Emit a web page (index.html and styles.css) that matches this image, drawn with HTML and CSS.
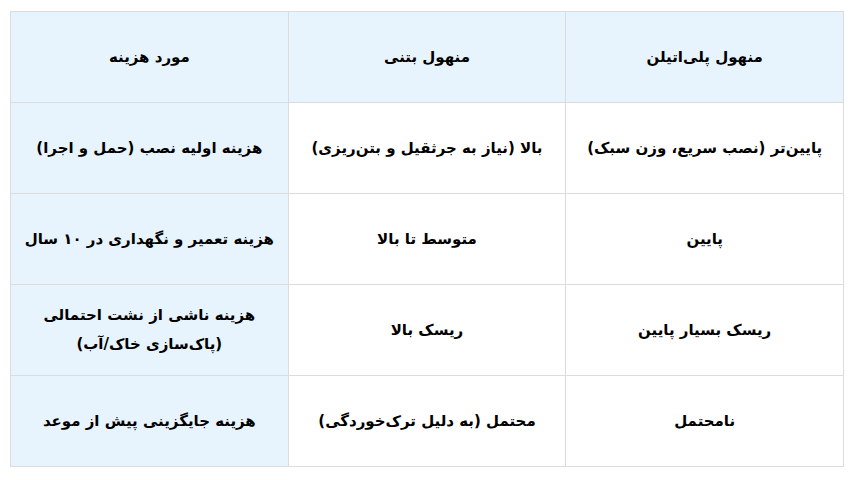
FILE: index.html
```html
<!DOCTYPE html>
<html lang="fa">
<head>
<meta charset="utf-8">
<link rel="stylesheet" href="styles.css">
</head>
<body>
<table class="cost-table">
  <tr class="head">
    <td class="key">مورد هزینه</td>
    <td>منهول بتنی</td>
    <td>منهول پلی‌اتیلن</td>
  </tr>
  <tr>
    <td class="key">هزینه اولیه نصب (حمل و اجرا)</td>
    <td>بالا (نیاز به جرثقیل و بتن‌ریزی)</td>
    <td>پایین‌تر (نصب سریع، وزن سبک)</td>
  </tr>
  <tr>
    <td class="key">هزینه تعمیر و نگهداری در ۱۰ سال</td>
    <td>متوسط تا بالا</td>
    <td>پایین</td>
  </tr>
  <tr>
    <td class="key">هزینه ناشی از نشت احتمالی<br>(پاک‌سازی خاک/آب)</td>
    <td>ریسک بالا</td>
    <td>ریسک بسیار پایین</td>
  </tr>
  <tr>
    <td class="key">هزینه جایگزینی پیش از موعد</td>
    <td>محتمل (به دلیل ترک‌خوردگی)</td>
    <td>نامحتمل</td>
  </tr>
</table>
</body>
</html>
```
FILE: styles.css
```css
html, body {
  margin: 0;
  background: #ffffff;
}
body {
  padding: 11px 10px;
  font-family: "DejaVu Sans", sans-serif;
}
.cost-table {
  width: 834px;
  border-collapse: collapse;
  table-layout: fixed;
}
.cost-table td {
  border: 1px solid #dcdcdc;
  height: 90px;
  padding: 0 12px;
  text-align: center;
  vertical-align: middle;
  direction: rtl;
  font-weight: bold;
  font-size: 15px;
  line-height: 29px;
  color: #000;
}
.cost-table .head td,
.cost-table td.key {
  background: #e8f4fd;
}
```
